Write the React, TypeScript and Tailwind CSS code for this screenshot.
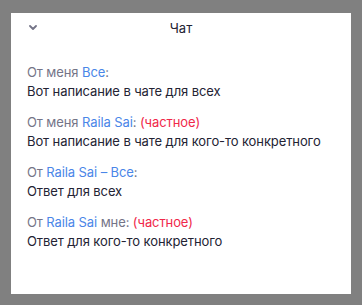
import React from 'react';

const gray = 'text-[#747487]';
const blue = 'text-[#4a86e8]';
const red = 'text-[#f0284a]';

export default function App() {
    return (
        <div className="w-[362px] h-[305px] bg-[#808080] pt-[13px] px-[11px] pb-[11px] font-['Inter',sans-serif]">
            <div className="h-full bg-white flex flex-col">
                {/* Header */}
                <div className="relative h-[28px] mt-[2px] flex items-center justify-center">
                    <svg className="absolute left-[18px] top-[10px]" width="8" height="5" viewBox="0 0 8 5">
                        <path d="M1 1 L4 4 L7 1" fill="none" stroke="#747487" strokeWidth="1.8" strokeLinecap="round" strokeLinejoin="round" />
                    </svg>
                    <span className="text-[13px] text-[#232333]">Чат</span>
                </div>

                {/* Messages */}
                <div className="px-[16px] pt-[20px] flex flex-col gap-[12px] text-[13px] leading-[19px] text-[#232333] tracking-[-0.1px]">
                    <div>
                        <div className={gray}>От меня <span className={blue}>Все</span>:</div>
                        <div>Вот написание в чате для всех</div>
                    </div>
                    <div>
                        <div className={gray}>От меня <span className={blue}>Raila Sai</span>: <span className={red}>(частное)</span></div>
                        <div>Вот написание в чате для кого-то конкретного</div>
                    </div>
                    <div>
                        <div className={gray}>От <span className={blue}>Raila Sai – Все</span>:</div>
                        <div>Ответ для всех</div>
                    </div>
                    <div>
                        <div className={gray}>От <span className={blue}>Raila Sai</span> мне: <span className={red}>(частное)</span></div>
                        <div>Ответ для кого-то конкретного</div>
                    </div>
                </div>
            </div>
        </div>
    );
}
